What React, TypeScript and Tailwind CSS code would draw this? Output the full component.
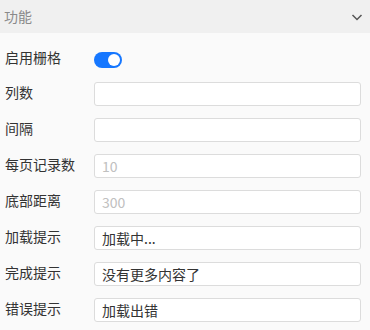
import { useState } from "react"

const font = { fontFamily: '"Noto Sans CJK SC", "Noto Sans", sans-serif' }

const rows = [
  { label: "列数", value: "", placeholder: "" },
  { label: "间隔", value: "", placeholder: "" },
  { label: "每页记录数", value: "", placeholder: "10" },
  { label: "底部距离", value: "", placeholder: "300" },
  { label: "加载提示", value: "加载中...", placeholder: "" },
  { label: "完成提示", value: "没有更多内容了", placeholder: "" },
  { label: "错误提示", value: "加载出错", placeholder: "" },
]

export default function App() {
  const [grid, setGrid] = useState(true)

  return (
    <div className="w-[370px] h-[330px] bg-[#fafafa] overflow-hidden text-[14px]" style={font}>
      <div className="h-[33px] bg-[#f0f0f0] flex items-center justify-between pl-[4px] pr-[7px]">
        <span className="text-[#8a8a8a]">功能</span>
        <svg width="12" height="12" viewBox="0 0 12 12" className="text-[#555]">
          <path d="M1.5 4l4.5 4.5 4.5-4.5" fill="none" stroke="currentColor" strokeWidth="1.5" />
        </svg>
      </div>

      <div className="pl-[5px] pr-[9px] pt-[13px] flex flex-col gap-[12px]">
        <div className="flex items-center h-[24px]">
          <span className="w-[89px] text-[#333] -mt-[2px]">启用栅格</span>
          <button
            onClick={() => setGrid(!grid)}
            className={`mt-[4px] w-[28px] h-[16px] rounded-full relative ${grid ? "bg-[#1677ff]" : "bg-[#ccc]"}`}
          >
            <span
              className={`absolute top-[2px] w-[12px] h-[12px] rounded-full bg-white ${grid ? "right-[2px]" : "left-[2px]"}`}
            />
          </button>
        </div>

        {rows.map((r) => (
          <div key={r.label} className="flex items-center h-[24px]">
            <span className="w-[89px] shrink-0 text-[#333] -mt-[3px]">{r.label}</span>
            <input
              defaultValue={r.value}
              placeholder={r.placeholder}
              className="flex-1 min-w-0 h-[24px] bg-white border border-[#dcdcdc] rounded-[3px] px-[7px] text-[#333] placeholder:text-[#c0c0c0] outline-none"
              style={font}
            />
          </div>
        ))}
      </div>
    </div>
  )
}
